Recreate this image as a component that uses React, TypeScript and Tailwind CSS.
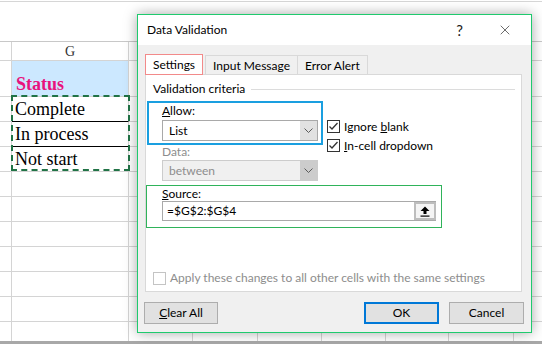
import { X } from "lucide-react"

const colW = ["w-[12px]", "w-[117px]", "w-[64px]", "w-[65px]", "w-[64px]", "w-[64px]", "w-[63px]", "w-[65px]", "w-[64px]"]
const rowH = ["h-[19px]", "h-[36px]", "h-[25px]", "h-[25px]", "h-[25px]", "h-[25px]", "h-[25px]", "h-[25px]", "h-[25px]", "h-[25px]", "h-[25px]", "h-[25px]", "h-[25px]"]

const Chevron = () => (
    <svg width="9" height="5" viewBox="0 0 9 5">
        <path d="M0.5 0.5 L4.5 4.5 L8.5 0.5" fill="none" stroke="#5a5a5a" strokeWidth="1" />
    </svg>
)

const Check = ({ checked, disabled }: { checked?: boolean; disabled?: boolean }) => (
    <div
        className={`w-[13px] h-[13px] shrink-0 border flex items-center justify-center bg-white ${
            disabled ? "border-[#c4c4c4]" : "border-[#333]"
        }`}
    >
        {checked && (
            <svg width="11" height="11" viewBox="0 0 11 11">
                <path d="M1.5 5.5 L4 8 L9.5 2" fill="none" stroke="#333" strokeWidth="1.3" />
            </svg>
        )}
    </div>
)

const Sheet = () => {
    const cellText = (r: number) => {
        if (r === 0) return <span className="w-full text-center text-[14px] text-[#333]">G</span>
        if (r === 1)
            return <span className="pl-[4px] pb-[1px] self-end font-bold text-[18px] text-[#e8137d] leading-[22px]">Status</span>
        if (r === 2) return <span className="pl-[3px] text-[18px] leading-[22px]">Complete</span>
        if (r === 3) return <span className="pl-[3px] text-[18px] leading-[22px]">In process</span>
        if (r === 4) return <span className="pl-[3px] text-[18px] leading-[22px]">Not start</span>
        return null
    }
    return (
        <div className="relative w-[542px] h-[344px] overflow-hidden bg-white font-['Liberation_Serif',serif] text-black">
            <div className="h-[341px] overflow-hidden">
                <div className="h-[40px] border-t border-[#d6d6d6] mt-[1px]" />
                <div className="border-t border-[#c8c8c8]">
                    {rowH.map((h, r) => (
                        <div key={r} className={`flex ${h}`}>
                            {colW.map((w, c) => (
                                <div
                                    key={c}
                                    className={`${w} shrink-0 border-r border-b border-[#d4d4d4] flex items-center ${
                                        c === 1 && r === 1 ? "bg-[#cce8ff]" : ""
                                    } ${c === 1 && (r === 2 || r === 3) ? "border-b-black" : ""}`}
                                >
                                    {c === 1 && cellText(r)}
                                </div>
                            ))}
                        </div>
                    ))}
                </div>
            </div>
            <div className="h-[3px] bg-[#a8a8a8]" />
            {/* copy marquee round G2:G4 */}
            <div className="absolute left-[11px] top-[95px] w-[119px] h-[76px] border-2 border-dashed border-[#217346]" />
        </div>
    )
}

const Dialog = () => (
    <div className="absolute left-[137px] top-[14px] w-[395px] h-[319px] border border-[#1fca6e] bg-[#f0f0f0] shadow-[0_0_12px_rgba(0,0,0,0.35)] font-['Lato',sans-serif] text-[12px] text-black flex flex-col">
        {/* title bar */}
        <div className="h-[30px] bg-white flex items-center pl-[9px] pr-[18px]">
            <span>Data Validation</span>
            <span className="ml-auto text-[15px] leading-none text-[#222]">?</span>
            <X className="ml-[34px] w-[16px] h-[16px] text-[#222]" strokeWidth={1} />
        </div>

        <div className="pl-[7px] pr-[9px] pt-[9px]">
            {/* tabs */}
            <div className="flex items-start h-[20px] relative z-10">
                <div className="h-[21px] px-[7px] border border-[#f28a8a] bg-white flex items-center">Settings</div>
                <div className="h-[20px] mt-[1px] ml-[2px] px-[7px] border border-[#d9d9d9] border-b-0 flex items-center">
                    Input Message
                </div>
                <div className="h-[20px] mt-[1px] -ml-px px-[7px] border border-[#d9d9d9] border-b-0 flex items-center">
                    Error Alert
                </div>
            </div>

            {/* panel */}
            <div className="h-[218px] border border-[#d9d9d9] bg-white flex flex-col">
                <div className="h-[16px] mt-[6px] pl-[7px] pr-[6px] flex items-center gap-[6px]">
                    <span>Validation criteria</span>
                    <div className="flex-1 h-px bg-[#dcdcdc]" />
                </div>

                <div className="flex h-[44px] mt-[4px]">
                    <div className="ml-[1px] w-[176px] h-[44px] border-2 border-[#1a9fe0] pl-[13px] flex flex-col">
                        <div className="h-[16px] leading-[16px]">
                            <span className="underline">A</span>llow:
                        </div>
                        <div className="mt-[1px] w-[156px] h-[21px] border border-[#a9a9a9] bg-white flex items-center">
                            <span className="pl-[6px] flex-1">List</span>
                            <div className="w-[17px] h-full bg-[#e1e1e1] flex items-center justify-center">
                                <Chevron />
                            </div>
                        </div>
                    </div>
                    <div className="ml-[4px] pt-[19px] flex flex-col gap-[6px]">
                        <div className="flex items-center gap-[4px] h-[13px]">
                            <Check checked />
                            <span>
                                Ignore <span className="underline">b</span>lank
                            </span>
                        </div>
                        <div className="flex items-center gap-[4px] h-[13px]">
                            <Check checked />
                            <span>
                                <span className="underline">I</span>n-cell dropdown
                            </span>
                        </div>
                    </div>
                </div>

                <div className="ml-[16px] h-[14px] leading-[14px] text-[#8d8d8d]">Data:</div>
                <div className="ml-[16px] mt-[1px] w-[156px] h-[21px] border border-[#cccccc] bg-[#f0f0f0] flex items-center">
                    <span className="pl-[6px] flex-1 text-[#8d8d8d]">between</span>
                    <div className="w-[17px] h-full bg-[#cccccc] flex items-center justify-center">
                        <Chevron />
                    </div>
                </div>

                <div className="mt-[4px] w-[296px] h-[43px] border border-[#2fb35a] pl-[15px] flex flex-col">
                    <div className="h-[15px] leading-[15px]">
                        <span className="underline">S</span>ource:
                    </div>
                    <div className="w-[274px] h-[20px] border border-[#a9a9a9] bg-white flex items-center">
                        <span className="pl-[4px] flex-1">=$G$2:$G$4</span>
                        <div className="w-[22px] h-[18px] mr-[-1px] border-2 border-[#bdbdbd] bg-[#f4f4f4] flex items-center justify-center">
                            <svg width="10" height="11" viewBox="0 0 10 11">
                                <path d="M5 0.5 L9.5 5 H6.5 V8 H3.5 V5 H0.5 Z" fill="#000" />
                                <rect x="0.5" y="9.5" width="9" height="1.2" fill="#000" />
                            </svg>
                        </div>
                    </div>
                </div>

                <div className="mt-[41px] ml-[7px] flex items-center gap-[4px]">
                    <Check disabled />
                    <span className="text-[#8d8d8d]">Apply these changes to all other cells with the same settings</span>
                </div>
            </div>
        </div>

        {/* buttons */}
        <div className="mt-[10px] pl-[6px] pr-[7px] flex items-center">
            <div className="w-[74px] h-[22px] border border-[#adadad] bg-[#e1e1e1] flex items-center justify-center">
                <span>
                    <span className="underline">C</span>lear All
                </span>
            </div>
            <div className="ml-auto w-[75px] h-[22px] border-2 border-[#0078d7] bg-[#e1e1e1] flex items-center justify-center">
                OK
            </div>
            <div className="ml-[10px] w-[75px] h-[22px] border border-[#adadad] bg-[#e1e1e1] flex items-center justify-center">
                Cancel
            </div>
        </div>
    </div>
)

export default function App() {
    return (
        <div className="relative w-[542px] h-[344px]">
            <Sheet />
            <Dialog />
        </div>
    )
}
